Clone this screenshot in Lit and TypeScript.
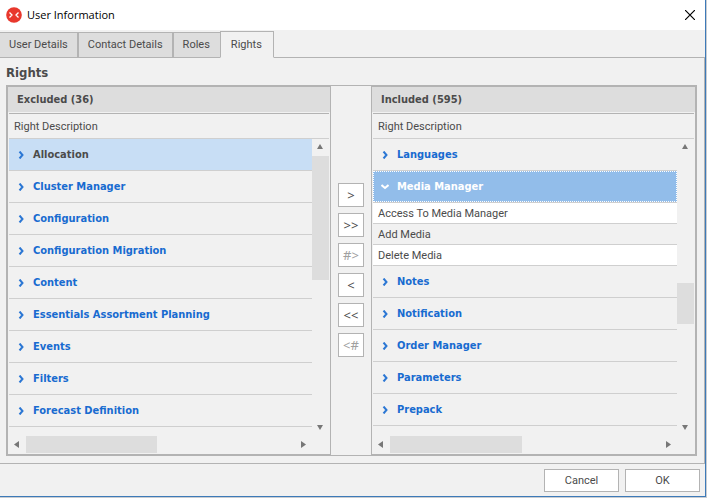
import { LitElement, html, css, svg, nothing } from "lit";
import { customElement, property, state } from "lit/decorators.js";
import { classMap } from "lit/directives/class-map.js";
import { styleMap } from "lit/directives/style-map.js";

interface Group {
  name: string;
  items?: string[];
}

interface Thumb {
  start: number;
  size: number;
}

const EXCLUDED: Group[] = [
  "Allocation",
  "Cluster Manager",
  "Configuration",
  "Configuration Migration",
  "Content",
  "Essentials Assortment Planning",
  "Events",
  "Filters",
  "Forecast Definition",
].map((name) => ({ name }));

const INCLUDED: Group[] = [
  { name: "Languages" },
  { name: "Media Manager", items: ["Access To Media Manager", "Add Media", "Delete Media"] },
  { name: "Notes" },
  { name: "Notification" },
  { name: "Order Manager" },
  { name: "Parameters" },
  { name: "Prepack" },
];

const TRIANGLES: Record<string, string> = {
  up: "M5 10 L8 5 L11 10 Z",
  down: "M5 6 H11 L8 11 Z",
  left: "M5 8.5 L10 5 V12 Z",
  right: "M6 5 L11 8.5 L6 12 Z",
};

@customElement("scroll-bar")
export class ScrollBar extends LitElement {
  @property() axis: "vertical" | "horizontal" = "vertical";
  @property({ attribute: false }) thumb: Thumb = { start: 0, size: 50 };

  static styles = css`
    :host {
      display: flex;
      background: #f1f1f1;
    }
    :host([axis="vertical"]) {
      flex-direction: column;
      width: 17px;
    }
    :host([axis="horizontal"]) {
      height: 17px;
    }
    button {
      width: 17px;
      height: 17px;
      flex: none;
      padding: 0;
      border: 0;
      background: transparent;
    }
    svg {
      display: block;
      fill: #777;
    }
    .track {
      flex: 1;
      position: relative;
    }
    .thumb {
      position: absolute;
      inset: 0;
      background: #dddddd;
    }
  `;

  private arrow(dir: string) {
    return html`<button tabindex="-1" aria-label="Scroll ${dir}">
      <svg width="17" height="17" viewBox="0 0 17 17"><path d=${TRIANGLES[dir]} /></svg>
    </button>`;
  }

  render() {
    const v = this.axis === "vertical";
    const { start, size } = this.thumb;
    const pos = v
      ? { top: `${start}%`, bottom: `${100 - start - size}%` }
      : { left: `${start}%`, right: `${100 - start - size}%` };
    return html`${this.arrow(v ? "up" : "left")}
      <div class="track"><div class="thumb" style=${styleMap(pos)}></div></div>
      ${this.arrow(v ? "down" : "right")}`;
  }
}

@customElement("rights-panel")
export class RightsPanel extends LitElement {
  @property() heading = "";
  @property() selected = "";
  @property() focused = "";
  @property({ attribute: false }) groups: Group[] = [];
  @property({ attribute: false }) vertical: Thumb = { start: 0, size: 50 };

  static styles = css`
    :host {
      display: flex;
      flex-direction: column;
      min-width: 0;
      box-sizing: border-box;
      color: #4b4b4b;
    }
    h2 {
      margin: 0;
      height: 25px;
      padding-left: 9px;
      background: #dddddd;
      font: bold 11px/25px "DejaVu Sans Condensed", "DejaVu Sans", sans-serif;
      font-stretch: condensed;
    }
    .list {
      flex: 1;
      display: flex;
      flex-direction: column;
      position: relative;
      margin: 1px;
      border-top: 1px solid #b3b3b3;
    }
    table {
      width: 100%;
      table-layout: fixed;
      border-spacing: 0;
    }
    th,
    td {
      box-sizing: border-box;
      padding: 2px 5px 0;
      height: 21px;
      border-bottom: 1px solid #cfcfcf;
      text-align: left;
      font-weight: normal;
      white-space: nowrap;
      overflow: hidden;
    }
    .column {
      height: 25px;
    }
    .group {
      height: 32px;
      padding: 0;
    }
    .gutter {
      width: 17px;
      padding: 0;
      border: 0;
    }
    col.bar {
      width: 17px;
    }
    .white td:first-child {
      background: #fff;
    }
    button {
      display: flex;
      align-items: center;
      gap: 8px;
      box-sizing: border-box;
      width: 100%;
      height: 31px;
      padding: 1px 0 0 8px;
      border: 0;
      background: transparent;
      color: #186bd0;
      font: bold 11px/16px "DejaVu Sans Condensed", "DejaVu Sans", sans-serif;
      font-stretch: condensed;
    }
    button svg {
      flex: none;
      fill: none;
      stroke: #2b77d4;
      stroke-width: 2;
    }
    .selected {
      background: #c8def5;
      color: #4b4b4b;
    }
    .focused {
      padding-left: 7px;
      border: 1px dotted #fff;
      background: #92bdea;
      color: #fff;
    }
    .focused svg {
      stroke: #fff;
    }
    .vertical {
      position: absolute;
      top: 25px;
      right: 0;
      bottom: 17px;
    }
    .horizontal {
      margin: auto 17px 0 0;
    }
  `;

  render() {
    return html`
      <h2>${this.heading}</h2>
      <div class="list">
        <table>
          <colgroup><col /><col class="bar" /></colgroup>
          <thead>
            <tr><th class="column" colspan="2" scope="col">Right Description</th></tr>
          </thead>
          <tbody>
            ${this.groups.map(
              (g) => html`
                <tr>
                  <td class="group">
                    <button
                      aria-expanded=${g.items ? "true" : "false"}
                      class=${classMap({
                        selected: g.name === this.selected,
                        focused: g.name === this.focused,
                      })}
                    >
                      <svg width="8" height="8" viewBox="0 0 8 8">
                        ${g.items
                          ? svg`<path d="M0.5 2 L4 5 L7.5 2" />`
                          : svg`<path d="M2.5 0.5 L5.5 4 L2.5 7.5" />`}
                      </svg>
                      ${g.name}
                    </button>
                  </td>
                  <td class="gutter"></td>
                </tr>
                ${g.items
                  ? g.items.map(
                      (item, i) => html`<tr class=${i % 2 ? "" : "white"}>
                        <td>${item}</td>
                        <td class="gutter"></td>
                      </tr>`
                    )
                  : nothing}
              `
            )}
          </tbody>
        </table>
        <scroll-bar class="vertical" axis="vertical" .thumb=${this.vertical}></scroll-bar>
        <scroll-bar class="horizontal" axis="horizontal" .thumb=${{ start: 0, size: 48.7 }}></scroll-bar>
      </div>
    `;
  }
}

@customElement("app-root")
export class AppRoot extends LitElement {
  @state() private tab = "Rights";

  static styles = css`
    :host {
      display: flex;
      flex-direction: column;
      box-sizing: border-box;
      min-height: 100vh;
      border-right: 1px solid #c9cdd2;
      border-bottom: 1px solid #c9cdd2;
      background: #f1f1f1;
      color: #4b4b4b;
      font: 11px/16px Roboto, "Noto Sans", sans-serif;
    }
    .window {
      flex: 1;
      display: flex;
      flex-direction: column;
      border-right: 1px solid #3d7ab8;
      border-bottom: 1px solid #3d7ab8;
    }
    button {
      font: inherit;
      color: inherit;
    }
    header {
      display: flex;
      align-items: center;
      height: 30px;
      padding: 0 5px 0 6px;
      background: #fff;
      color: #000;
    }
    header h1 {
      flex: 1;
      margin: 0 0 0 5px;
      font: 11px/16px "Open Sans", "Noto Sans", sans-serif;
    }
    .close {
      width: 20px;
      height: 20px;
      padding: 5px;
      border: 0;
      background: transparent;
    }
    svg {
      display: block;
    }
    nav {
      display: flex;
      align-items: flex-end;
      height: 28px;
      box-sizing: border-box;
      box-shadow: inset 0 -1px #b3b3b3;
    }
    nav button {
      box-sizing: border-box;
      height: 26px;
      padding: 0 9px;
      border: 1px solid #b3b3b3;
      background: #dddddd;
    }
    nav button:first-child {
      border-left: 0;
    }
    nav .active {
      height: 27px;
      padding: 0 11px 0 10px;
      border-bottom-color: #f1f1f1;
      background: #f1f1f1;
    }
    nav button:has(+ .active) {
      padding-right: 10px;
      border-right: 0;
    }
    main {
      flex: 1;
      display: flex;
      flex-direction: column;
      padding: 7px 7px 7px 6px;
      border-right: 1px solid #b3b3b3;
      border-bottom: 1px solid #b3b3b3;
    }
    main h2 {
      margin: 0 0 4px;
      font: bold 13px/16px "DejaVu Sans Condensed", "DejaVu Sans", sans-serif;
      font-stretch: condensed;
    }
    .transfer {
      flex: 1;
      display: grid;
      grid-template-columns: 325fr 40px 326fr;
    }
    .excluded {
      border: 2px solid #b3b3b3;
      border-right-width: 1px;
    }
    .included {
      border: 2px solid #b3b3b3;
      border-left-width: 1px;
    }
    .moves {
      display: flex;
      flex-direction: column;
      align-items: center;
      justify-content: center;
      gap: 6px;
      padding-bottom: 2px;
      border: 0 solid #b3b3b3;
      border-width: 1px 0;
    }
    .moves button {
      box-sizing: border-box;
      width: 26px;
      height: 24px;
      padding: 0;
      border: 1px solid #b3b3b3;
      background: #fff;
      font: 13px/16px "Noto Sans", sans-serif;
    }
    .moves button:disabled {
      color: #a0a0a0;
    }
    footer {
      display: flex;
      justify-content: flex-end;
      gap: 6px;
      padding: 5px 5px 4px;
    }
    footer button {
      box-sizing: border-box;
      width: 75px;
      height: 23px;
      padding: 0;
      border: 1px solid #b3b3b3;
      background: #fff;
    }
  `;

  render() {
    return html`
      <div class="window">
        <header>
          <svg width="16" height="16" viewBox="0 0 16 16">
            <circle cx="8" cy="8" r="7.8" fill="#e8372c" />
            <path d="M3.5 5.5 L6 8 L3.5 10.5 M12.5 5.5 L10 8 L12.5 10.5" fill="none" stroke="#fff" stroke-width="1.3" />
          </svg>
          <h1>User Information</h1>
          <button class="close" aria-label="Close">
            <svg width="10" height="10" viewBox="0 0 10 10">
              <path d="M0 0 L10 10 M10 0 L0 10" stroke="#000" stroke-width="1.2" />
            </svg>
          </button>
        </header>
        <nav role="tablist">
          ${["User Details", "Contact Details", "Roles", "Rights"].map(
            (t) => html`<button
              role="tab"
              aria-selected=${t === this.tab ? "true" : "false"}
              class=${classMap({ active: t === this.tab })}
              @click=${() => (this.tab = t)}
            >${t}</button>`
          )}
        </nav>
        <main>
          <h2>Rights</h2>
          <div class="transfer">
            <rights-panel
              class="excluded"
              heading="Excluded (36)"
              selected="Allocation"
              .groups=${EXCLUDED}
              .vertical=${{ start: 0, size: 47.1 }}
            ></rights-panel>
            <div class="moves">
              ${[">", ">>", "#>", "<", "<<", "<#"].map(
                (m) => html`<button ?disabled=${m.includes("#")}>${m}</button>`
              )}
            </div>
            <rights-panel
              class="included"
              heading="Included (595)"
              focused="Media Manager"
              .groups=${INCLUDED}
              .vertical=${{ start: 48.3, size: 15.6 }}
            ></rights-panel>
          </div>
        </main>
        <footer>
          <button>Cancel</button>
          <button>OK</button>
        </footer>
      </div>
    `;
  }
}
